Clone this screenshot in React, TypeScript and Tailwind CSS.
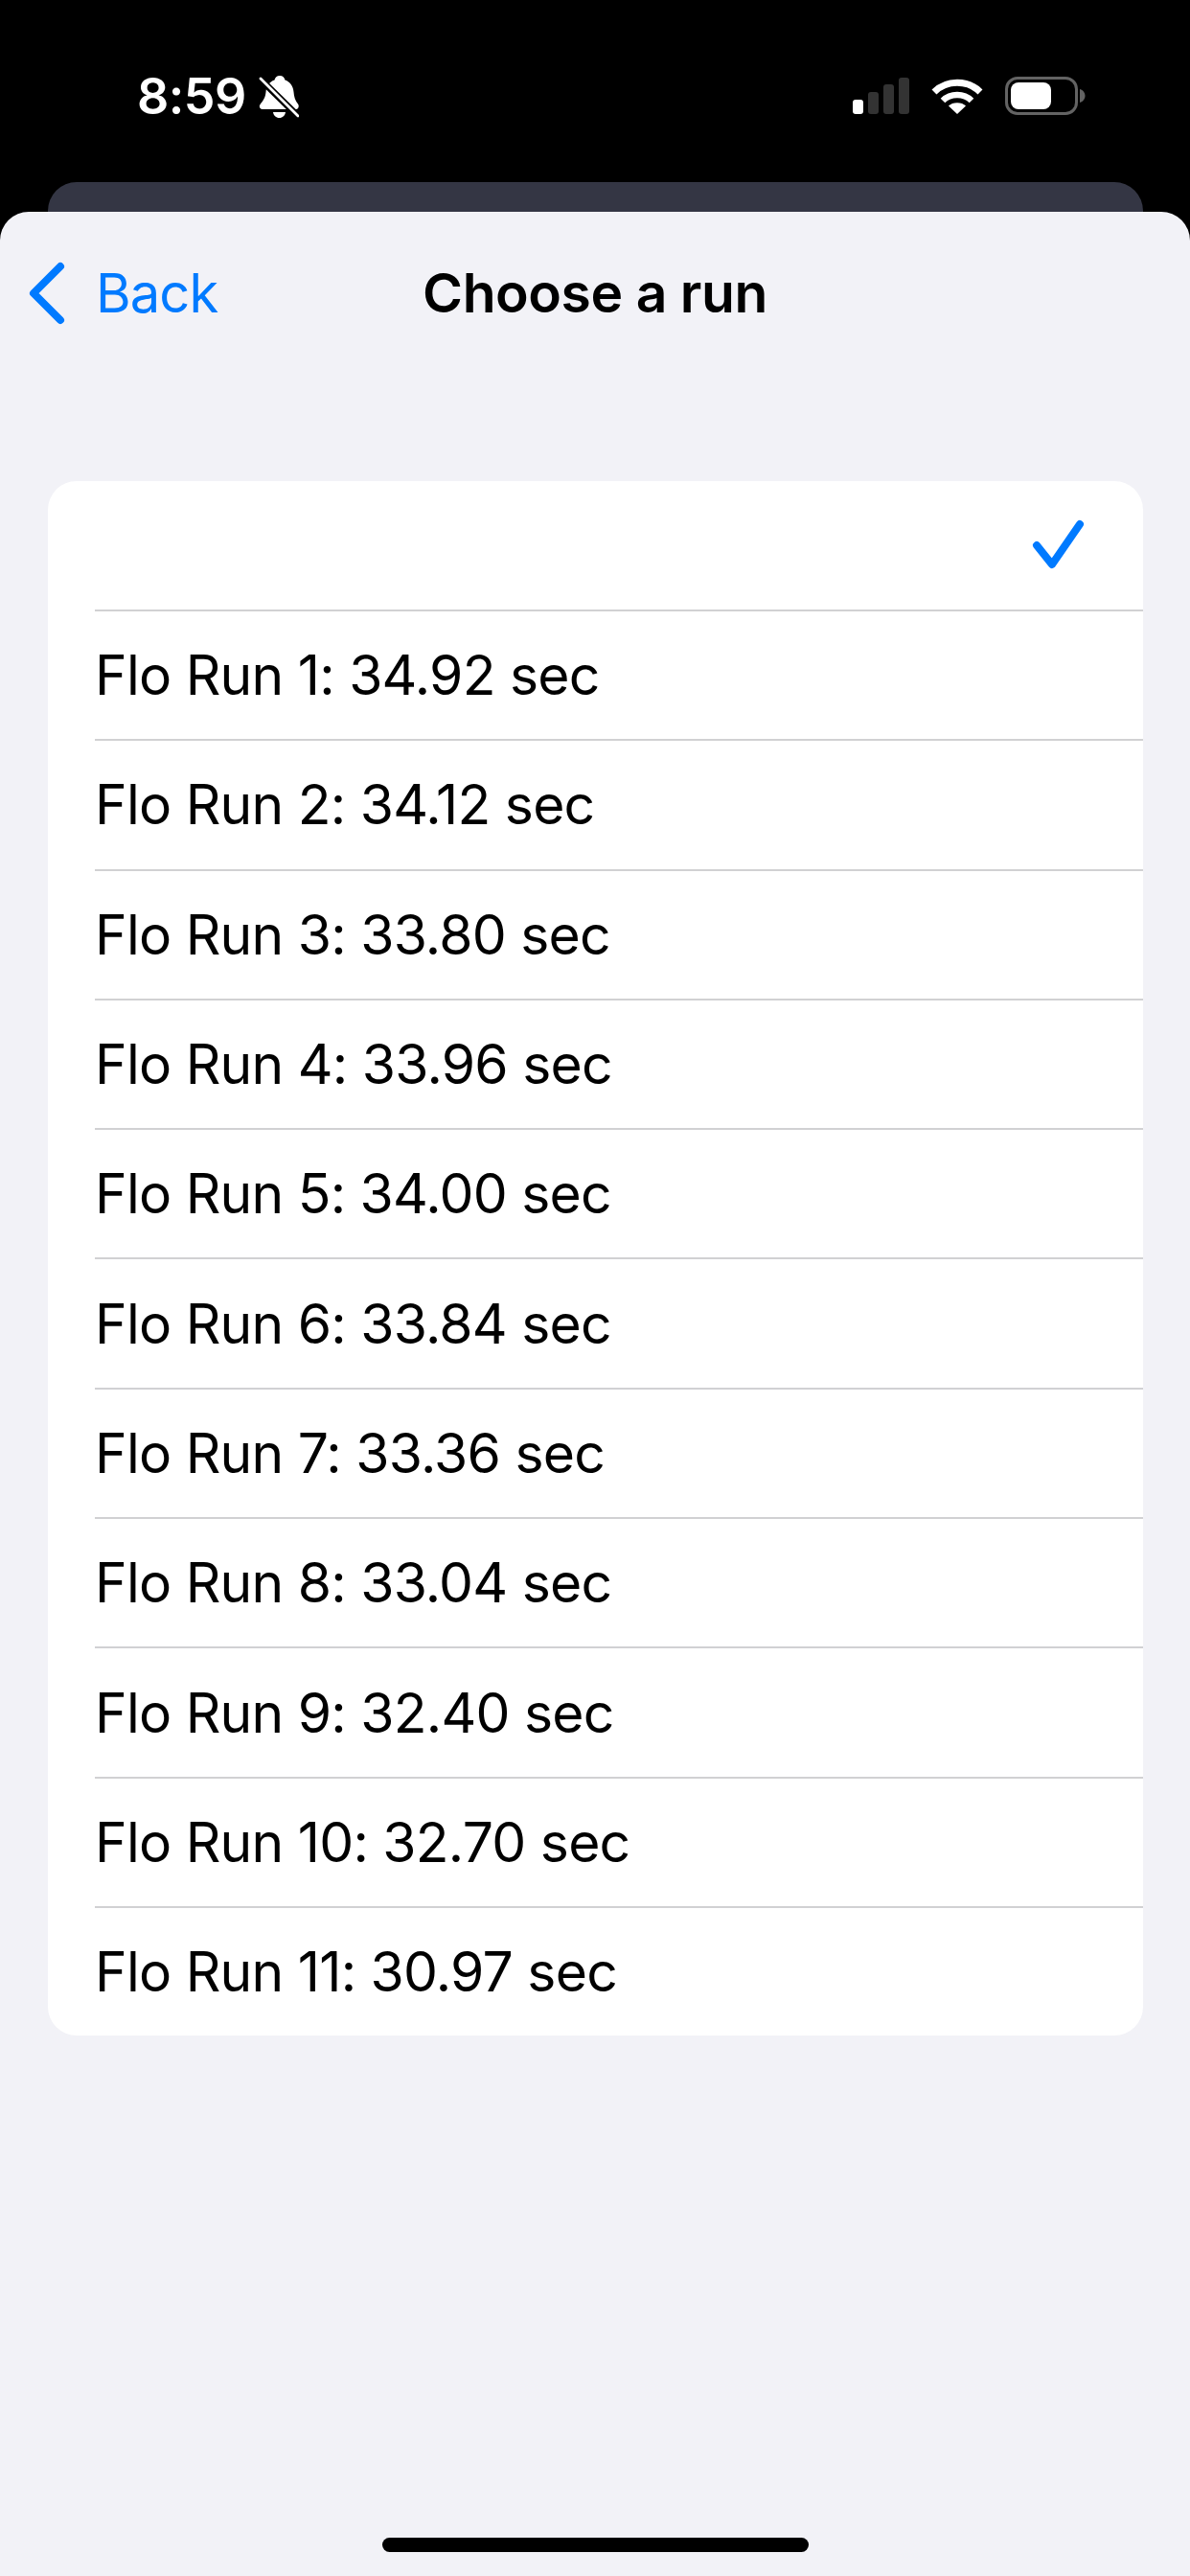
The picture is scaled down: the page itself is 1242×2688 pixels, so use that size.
const runs = [
  "Flo Run 1: 34.92 sec",
  "Flo Run 2: 34.12 sec",
  "Flo Run 3: 33.80 sec",
  "Flo Run 4: 33.96 sec",
  "Flo Run 5: 34.00 sec",
  "Flo Run 6: 33.84 sec",
  "Flo Run 7: 33.36 sec",
  "Flo Run 8: 33.04 sec",
  "Flo Run 9: 32.40 sec",
  "Flo Run 10: 32.70 sec",
  "Flo Run 11: 30.97 sec",
];

function BellSlash() {
  return (
    <svg width="42" height="44" viewBox="0 0 42 44" className="ml-[13px]">
      <path
        d="M22 0c3 0 5 2 5.500 4.500C33 6.500 36 11 36.500 17c.4 5 1.500 9 4.500 12.500 1.500 2 .5 5.500-2 5.500H4c-3 0-4-3-2.500-5C4.500 26 7 23 7.500 17 8 11 11 6.500 16.500 4.500 17 2 19 0 22 0z"
        fill="#fff"
      />
      <path d="M15 38h13c-.5 3.500-3 6-6.500 6s-6-2.500-6.500-6z" fill="#fff" />
      <path d="M-2 0L44 45" stroke="#000" strokeWidth="7" />
      <path d="M2 3L41 42" stroke="#fff" strokeWidth="2.800" strokeLinecap="round" />
    </svg>
  );
}

function Signal() {
  return (
    <div className="flex items-end gap-[5px] h-[38px]">
      <div className="w-[11px] h-[15px] rounded-[3px] bg-white" />
      <div className="w-[11px] h-[23px] rounded-[3px] bg-[#333333]" />
      <div className="w-[11px] h-[31px] rounded-[3px] bg-[#333333]" />
      <div className="w-[11px] h-[38px] rounded-[3px] bg-[#333333]" />
    </div>
  );
}

function Wifi() {
  return (
    <svg width="54" height="38" viewBox="0 0 54 38" className="ml-[23px]">
      <path d="M3 15C16 2 38 2 51 15" stroke="#fff" strokeWidth="7" fill="none" strokeLinecap="butt" />
      <path d="M12 24C20 16 34 16 42 24" stroke="#fff" strokeWidth="6.500" fill="none" />
      <path d="M27 38L18 29.500C22 25 32 25 36 29.500z" fill="#fff" />
    </svg>
  );
}

function Battery() {
  return (
    <div className="flex items-center ml-[23px]">
      <div className="w-[76px] h-[40px] rounded-[13px] border-[3px] border-[#636363] p-[3px]">
        <div className="w-[42px] h-full rounded-[8px] bg-white" />
      </div>
      <svg width="6" height="14" viewBox="0 0 6 14" className="ml-[2px]">
        <path d="M0 0c3.500 1 5.500 4 5.500 7S3.500 13 0 14z" fill="#636363" />
      </svg>
    </div>
  );
}

export default function App() {
  return (
    <div className="w-[1242px] h-[2688px] bg-black flex flex-col overflow-hidden font-['Inter','Liberation_Sans',sans-serif]">
      <div className="h-[190px] shrink-0 flex items-start justify-between pl-[143px] pr-[109px] pt-[80px]">
        <div className="flex items-center h-[42px]">
          <span className="text-white text-[52px] leading-[42px] font-semibold tracking-[-0.5px]">8:59</span>
          <BellSlash />
        </div>
        <div className="flex items-center h-[40px]">
          <Signal />
          <Wifi />
          <Battery />
        </div>
      </div>
      <div className="ml-[50px] mr-[49px] h-[31px] shrink-0 rounded-t-[30px] bg-[#343644]" />
      <div className="flex-1 bg-[#f2f2f7] rounded-t-[30px] flex flex-col">
        <div className="grid grid-cols-[1fr_auto_1fr] items-center h-[169px] px-[29px]">
          <div className="flex items-center">
            <svg width="40" height="66" viewBox="0 0 40 66">
              <path d="M34 5L6 33L34 61" stroke="#007aff" strokeWidth="8" fill="none" strokeLinecap="round" strokeLinejoin="round" />
            </svg>
            <span className="ml-[31px] text-[#007aff] text-[56px] leading-none tracking-[-0.9px]">Back</span>
          </div>
          <span className="text-black text-[57px] leading-none font-semibold tracking-[-0.45px]">Choose a run</span>
          <div />
        </div>
        <div className="mt-[112px] ml-[50px] mr-[49px] bg-white rounded-[30px] overflow-hidden flex flex-col">
          <div className="h-[134px] flex items-center justify-end pr-[60px]">
            <svg width="56" height="54" viewBox="0 0 56 54">
              <path d="M5 27L21 47L50 5" stroke="#007aff" strokeWidth="8" fill="none" strokeLinecap="round" strokeLinejoin="round" />
            </svg>
          </div>
          {runs.map((r) => (
            <div key={r} className="ml-[49px] h-[135.3px] border-t-2 border-[#d1d1d3] flex items-center">
              <span className="text-black text-[57px] leading-none tracking-[-0.75px]">{r}</span>
            </div>
          ))}
        </div>
        <div className="mt-auto mb-[25px] self-center w-[445px] h-[15px] rounded-full bg-black" />
      </div>
    </div>
  );
}
